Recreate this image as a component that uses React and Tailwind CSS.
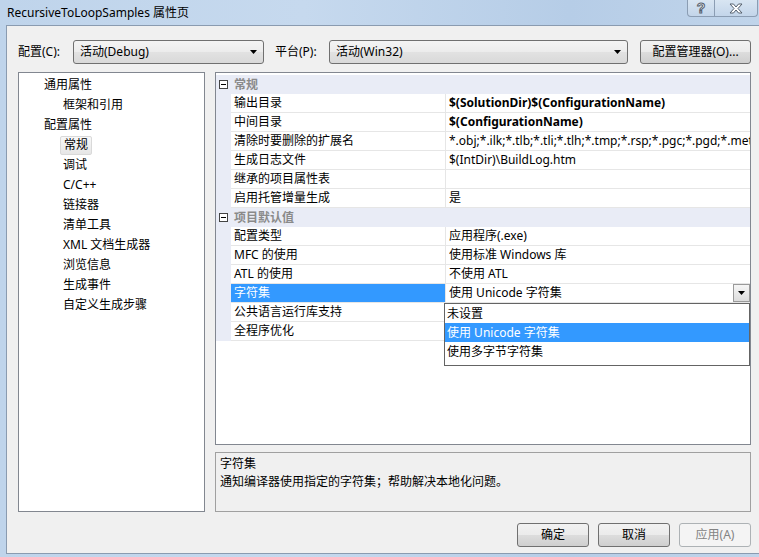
import React from "react";

const Arrow = ({ className = "" }) => (
  <svg width="7" height="4" viewBox="0 0 7 4" className={className}>
    <path d="M0 0H7L3.5 4Z" fill="#000" />
  </svg>
);

function Combo({ w, text }) {
  return (
    <div
      className={`${w} h-[24px] flex items-center pl-[6px] pr-[6px] border border-[#707070] rounded-[3px] bg-[linear-gradient(to_bottom,#f4f4f4_0%,#ececec_50%,#e2e2e2_50%,#d9d9d9_100%)]`}
    >
      <span className="flex-1 whitespace-nowrap overflow-hidden">{text}</span>
      <Arrow />
    </div>
  );
}

function Btn({ children, disabled, w = "w-[72px]" }) {
  return (
    <div
      className={`${w} h-[24px] flex items-center justify-center rounded-[3px] border ${
        disabled
          ? "border-[#adb2b5] bg-[#f4f4f4] text-[#838383]"
          : "border-[#707070] bg-[linear-gradient(to_bottom,#f2f2f2_0%,#ebebeb_50%,#dddddd_50%,#cfcfcf_100%)]"
      }`}
    >
      {children}
    </div>
  );
}

const tree = [
  { t: "通用属性", l: 1 },
  { t: "框架和引用", l: 2 },
  { t: "配置属性", l: 1 },
  { t: "常规", l: 2, sel: true },
  { t: "调试", l: 2 },
  { t: "C/C++", l: 2 },
  { t: "链接器", l: 2 },
  { t: "清单工具", l: 2 },
  { t: "XML 文档生成器", l: 2 },
  { t: "浏览信息", l: 2 },
  { t: "生成事件", l: 2 },
  { t: "自定义生成步骤", l: 2 },
];

function Category({ label }) {
  return (
    <div className="h-[19px] flex items-center bg-[#e9ecf6]">
      <div className="w-[15px] h-full flex items-center pl-[3px]">
        <div className="w-[9px] h-[9px] border border-[#444] bg-white flex items-center justify-center">
          <div className="w-[5px] h-px bg-black" />
        </div>
      </div>
      <span className="pl-[3px] font-bold text-[#8a8a8a]">{label}</span>
    </div>
  );
}

function Row({ name, value, bold, sel, combo }) {
  return (
    <div className="h-[19px] flex">
      <div className="w-[15px] h-full bg-[#e9ecf6]" />
      <div
        className={`w-[215px] h-full flex items-center pl-[3px] border-r border-b border-[#e6e6e6] whitespace-nowrap ${
          sel ? "bg-[#3399ff] text-white" : ""
        }`}
      >
        {name}
      </div>
      <div
        className={`flex-1 min-w-0 h-full flex items-center pl-[3px] border-b border-[#e6e6e6] whitespace-nowrap overflow-hidden ${
          bold ? "font-bold" : ""
        }`}
      >
        <span className="flex-1 overflow-hidden">{value}</span>
        {combo && (
          <div className="w-[17px] h-[18px] shrink-0 flex items-center justify-center border border-[#9a9a9a] bg-[linear-gradient(to_bottom,#f6f6f6,#dcdcdc)]">
            <Arrow />
          </div>
        )}
      </div>
    </div>
  );
}

export default function App() {
  return (
    <div className="w-[759px] h-[557px] overflow-hidden flex flex-col bg-[linear-gradient(to_right,#bfd4eb,#c6d9ee_40%,#b6cde7_75%,#c0d4ea)] font-['Noto_Sans','Noto_Sans_CJK_SC',sans-serif] text-[12px] text-black">
      {/* title bar */}
      <div className="h-[25px] shrink-0 flex items-start">
        <div className="pl-[7px] pt-[4px] leading-[17px] text-black">
          RecursiveToLoopSamples 属性页
        </div>
        <div className="ml-auto mr-[1px] flex h-[17px]">
          <div className="w-[28px] h-full border border-t-0 border-[#8b9db3] rounded-bl-[4px] bg-[linear-gradient(to_bottom,#d8e5f2,#c3d5ea)] flex items-center justify-center">
            <svg width="12" height="14" viewBox="0 0 12 14">
              <text
                x="6"
                y="12"
                textAnchor="middle"
                fontSize="14"
                fontWeight="bold"
                fontFamily="Liberation Sans, sans-serif"
                fill="#fff"
                stroke="#55606e"
                strokeWidth="1"
              >
                ?
              </text>
            </svg>
          </div>
          <div className="w-[43px] h-full border border-t-0 border-l-0 border-[#8b9db3] rounded-br-[4px] bg-[linear-gradient(to_bottom,#d8e5f2,#c3d5ea)] flex items-center justify-center">
            <svg width="14" height="11" viewBox="0 0 14 11">
              <path
                d="M1 1H4.5L7 4L9.5 1H13L9 5.5L13 10H9.5L7 7L4.5 10H1L5 5.5Z"
                fill="#fff"
                stroke="#55606e"
                strokeWidth="1"
                strokeLinejoin="round"
              />
            </svg>
          </div>
        </div>
      </div>

      {/* client */}
      <div className="flex-1 flex pl-[6px] pb-[3px]">
        <div className="flex-1 bg-[#f0f0f0] border-l border-t border-b border-[#8a9bb0] flex flex-col pl-[11px] pt-[14px] pb-[6px]">
          {/* top row */}
          <div className="flex items-center h-[24px]">
            <div className="w-[55px]">配置(C):</div>
            <Combo w="w-[191px]" text="活动(Debug)" />
            <div className="w-[54px] ml-[11px]">平台(P):</div>
            <Combo w="w-[299px]" text="活动(Win32)" />
            <div className="ml-[12px]">
              <Btn w="w-[111px]">配置管理器(O)...</Btn>
            </div>
          </div>

          {/* panels */}
          <div className="flex mt-[8px] h-[440px]">
            <div className="w-[187px] h-full border border-[#828790] bg-white pt-[2px]">
              {tree.map((it) => (
                <div
                  key={it.t}
                  className={`h-[20px] flex items-center ${
                    it.l === 1 ? "pl-[25px]" : it.sel ? "pl-[41px]" : "pl-[44px]"
                  }`}
                >
                  {it.sel ? (
                    <span className="px-[3px] h-[19px] flex items-center rounded-[2px] border border-[#d9d9d9] bg-[linear-gradient(to_bottom,#f8f8f8,#e6e6e6)]">
                      {it.t}
                    </span>
                  ) : (
                    it.t
                  )}
                </div>
              ))}
            </div>

            <div className="w-[536px] ml-[10px] h-full flex flex-col">
              <div className="relative h-[373px] border border-[#828790] bg-white">
                <div className="h-full overflow-hidden pt-[2px]">
                  <Category label="常规" />
                  <Row name="输出目录" value="$(SolutionDir)$(ConfigurationName)" bold />
                  <Row name="中间目录" value="$(ConfigurationName)" bold />
                  <Row
                    name="清除时要删除的扩展名"
                    value="*.obj;*.ilk;*.tlb;*.tli;*.tlh;*.tmp;*.rsp;*.pgc;*.pgd;*.meta;$(TargetPath);$(ExtensionsToDeleteOnClean)"
                  />
                  <Row name="生成日志文件" value="$(IntDir)\BuildLog.htm" />
                  <Row name="继承的项目属性表" value="" />
                  <Row name="启用托管增量生成" value="是" />
                  <Category label="项目默认值" />
                  <Row name="配置类型" value="应用程序(.exe)" />
                  <Row name="MFC 的使用" value="使用标准 Windows 库" />
                  <Row name="ATL 的使用" value="不使用 ATL" />
                  <Row name="字符集" value="使用 Unicode 字符集" sel combo />
                  <Row name="公共语言运行库支持" value="" />
                  <Row name="全程序优化" value="" />
                </div>

                {/* dropdown list */}
                <div className="absolute left-[228px] top-[230px] w-[306px] h-[63px] border border-[#646464] bg-white">
                  <div className="h-[19px] flex items-center pl-[2px]">未设置</div>
                  <div className="h-[19px] flex items-center pl-[2px] bg-[#3399ff] text-white">
                    使用 Unicode 字符集
                  </div>
                  <div className="h-[19px] flex items-center pl-[2px]">使用多字节字符集</div>
                </div>
              </div>

              <div className="mt-[7px] h-[60px] border border-[#a0a0a0] bg-[#f0f0f0] pl-[4px] pt-[2px] leading-[18px]">
                <div>字符集</div>
                <div>通知编译器使用指定的字符集；帮助解决本地化问题。</div>
              </div>
            </div>
          </div>

          {/* buttons */}
          <div className="mt-[11px] w-[733px] flex justify-end gap-[9px]">
            <Btn>确定</Btn>
            <Btn>取消</Btn>
            <Btn disabled>应用(A)</Btn>
          </div>
        </div>
      </div>
    </div>
  );
}
